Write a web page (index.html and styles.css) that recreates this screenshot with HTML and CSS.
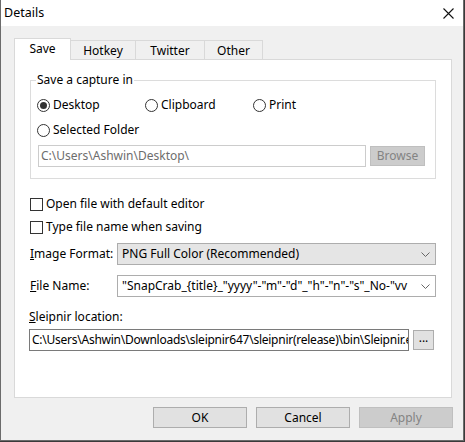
FILE: index.html
```html
<!DOCTYPE html>
<html>
<head>
<meta charset="utf-8">
<link rel="stylesheet" href="styles.css">
</head>
<body>
<div class="window">
  <div class="titlebar">
    <span class="title">Details</span>
    <svg class="close" width="11" height="11" viewBox="0 0 11 11"><path d="M0.5 0.5 L10.5 10.5 M10.5 0.5 L0.5 10.5" stroke="#111" stroke-width="1.1" fill="none"/></svg>
  </div>
  <div class="body">
    <div class="tabs">
      <div class="tab active">Save</div>
      <div class="tab t-hotkey">Hotkey</div>
      <div class="tab t-twitter">Twitter</div>
      <div class="tab t-other">Other</div>
    </div>
    <div class="panel">
      <fieldset class="group">
        <legend>Save a capture in</legend>
        <div class="radios">
          <div class="radio-item"><span class="radio checked"></span><span>Desktop</span></div>
          <div class="radio-item"><span class="radio"></span><span>Clipboard</span></div>
          <div class="radio-item"><span class="radio"></span><span>Print</span></div>
        </div>
        <div class="radios row2">
          <div class="radio-item"><span class="radio"></span><span>Selected Folder</span></div>
        </div>
        <div class="path-row">
          <div class="textbox disabled path">C:\Users\Ashwin\Desktop\</div>
          <div class="btn disabled browse">Browse</div>
        </div>
      </fieldset>
      <div class="check-item first"><span class="check"></span><span>Open file with default editor</span></div>
      <div class="check-item"><span class="check"></span><span>Type file name when saving</span></div>
      <div class="field-row first">
        <span class="label"><u>I</u>mage Format:</span>
        <div class="combo gray"><span class="clip">PNG Full Color (Recommended)</span><svg class="chev" width="9" height="5" viewBox="0 0 9 5"><path d="M0.5 0.5 L4.5 4.5 L8.5 0.5" stroke="#666" fill="none"/></svg></div>
      </div>
      <div class="field-row">
        <span class="label"><u>F</u>ile Name:</span>
        <div class="combo"><span class="clip">"SnapCrab_{title}_"yyyy"-"m"-"d"_"h"-"n"-"s"_No-"vv</span><svg class="chev" width="9" height="5" viewBox="0 0 9 5"><path d="M0.5 0.5 L4.5 4.5 L8.5 0.5" stroke="#666" fill="none"/></svg></div>
      </div>
      <div class="sleip-label"><u>S</u>leipnir location:</div>
      <div class="sleip-row">
        <div class="textbox sleip"><span class="clip tight">C:\Users\Ashwin\Downloads\sleipnir647\sleipnir(release)\bin\Sleipnir.exe</span></div>
        <div class="btn dots">...</div>
      </div>
    </div>
    <div class="footer">
      <div class="btn big">OK</div>
      <div class="btn big">Cancel</div>
      <div class="btn big disabled">Apply</div>
    </div>
  </div>
</div>
</body>
</html>
```

FILE: styles.css
```css
* { box-sizing: border-box; }
html, body { margin: 0; padding: 0; background: #3a3a3a; }
body {
  font-family: "Noto Sans", "Open Sans", sans-serif;
  font-size: 12px;
  color: #000;
  width: 465px;
  height: 442px;
  overflow: hidden;
}
.window {
  width: 464px;
  height: 441px;
  background: #f0f0f0;
  border: 1px solid #6b6b6b;
  border-top: none;
  display: flex;
  flex-direction: column;
}
.titlebar {
  height: 26px;
  background: #fff;
  display: flex;
  align-items: center;
  justify-content: space-between;
  padding: 0 9px 0 3px;
}
.title { font-size: 12.5px; line-height: 16px; }
.body {
  padding: 12px 0 0 13px;
  flex: 1;
}
.tabs {
  display: flex;
  align-items: flex-end;
  height: 21px;
}
.tab {
  height: 19px;
  border: 1px solid #d9d9d9;
  border-bottom: none;
  border-left: none;
  background: #f0f0f0;
  display: flex;
  align-items: center;
  justify-content: center;
  line-height: 16px;
  padding-top: 1px;
}
.tab.active {
  height: 22px;
  width: 57px;
  background: #fff;
  border-left: 1px solid #d9d9d9;
  margin-bottom: -1px;
  position: relative;
  z-index: 1;
  padding-top: 0;
  padding-bottom: 2px;
}
.t-hotkey { width: 65px; }
.t-twitter { width: 69px; }
.t-other { width: 58px; }
.panel {
  width: 438px;
  height: 339px;
  background: #fff;
  border: 1px solid #d9d9d9;
  padding: 12px 0 0 15px;
}
.group {
  margin: 0;
  width: 406px;
  border: 1px solid #dcdcdc;
  padding: 7px 6px 11px 6px;
  min-inline-size: 0;
}
.group legend {
  padding: 0 1px;
  margin-left: -1px;
  line-height: 16px;
}
.radios {
  display: grid;
  grid-template-columns: 108px 108px 108px;
  height: 20px;
}
.radios.row2 { margin-top: 5px; }
.radio-item, .check-item {
  display: flex;
  align-items: center;
  height: 20px;
  line-height: 16px;
}
.radio {
  width: 13px;
  height: 13px;
  border: 1px solid #333;
  border-radius: 50%;
  margin-right: 3px;
  display: flex;
  align-items: center;
  justify-content: center;
  background: #fff;
}
.radio.checked::after {
  content: "";
  width: 7px;
  height: 7px;
  border-radius: 50%;
  background: #333;
}
.path-row {
  display: flex;
  align-items: center;
  margin-top: 5px;
  gap: 4px;
  padding-left: 1px;
}
.textbox {
  border: 1px solid #7a7a7a;
  background: #fff;
  height: 22px;
  display: flex;
  align-items: center;
  padding-left: 2px;
  line-height: 16px;
  white-space: nowrap;
  overflow: hidden;
}
.textbox.disabled {
  border-color: #cccccc;
  color: #6d6d6d;
}
.path { width: 328px; }
.btn {
  border: 1px solid #adadad;
  background: #e1e1e1;
  display: flex;
  align-items: center;
  justify-content: center;
  line-height: 16px;
}
.btn.disabled {
  background: #cccccc;
  border-color: #bfbfbf;
  color: #838383;
}
.browse { width: 55px; height: 20px; }
.check {
  width: 13px;
  height: 13px;
  border: 1px solid #333;
  background: #fff;
  margin-right: 3px;
}
.check-item.first { margin-top: 15px; }
.check-item { margin-top: 3px; }
.field-row {
  display: flex;
  align-items: center;
  margin-top: 10px;
}
.field-row.first { margin-top: 6px; }
.label { width: 87px; line-height: 16px; }
.combo {
  width: 319px;
  height: 22px;
  border: 1px solid #adadad;
  background: #fff;
  display: flex;
  align-items: center;
  justify-content: space-between;
  padding: 0 5px 0 4px;
  line-height: 16px;
  white-space: nowrap;
}
.combo.gray { background: #e5e5e5; }
.clip { overflow: hidden; white-space: nowrap; min-width: 0; flex: 1; }
.combo .clip { flex: none; width: 290px; }
.tight { letter-spacing: -0.25px; }
.chev { flex: none; }
.sleip-label {
  margin-top: 12px;
  line-height: 16px;
  margin-left: -1px;
}
.sleip-row {
  display: flex;
  align-items: center;
  margin-top: 4px;
  margin-left: -1px;
  gap: 4px;
}
.sleip { width: 380px; height: 22px; }
.dots { width: 21px; height: 20px; padding-bottom: 4px; }
.footer {
  display: flex;
  justify-content: flex-end;
  gap: 9px;
  margin-top: 9px;
  padding-right: 10px;
}
.btn.big { width: 94px; height: 21px; }
```
